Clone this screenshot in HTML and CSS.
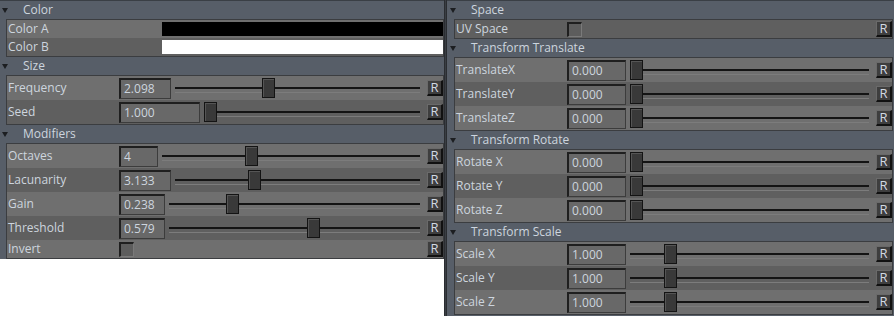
FILE: index.html
```html
<!DOCTYPE html>
<html>
<head>
<meta charset="utf-8">
<link rel="stylesheet" href="styles.css">
</head>
<body>
<div class="app">
  <section class="panel panel-left">
    <div class="panel-body">
      <div class="group-head"><span class="caret"></span><span>Color</span></div>
      <div class="group-box">
        <div class="row short light"><span class="label">Color A</span><span class="swatch swatch-black"></span></div>
        <div class="row short dark"><span class="label">Color B</span><span class="swatch swatch-white"></span></div>
      </div>

      <div class="group-head"><span class="caret"></span><span>Size</span></div>
      <div class="group-box">
        <div class="row light"><span class="label">Frequency</span><span class="field w52">2.098</span><span class="slider"><span class="handle" style="left:calc((100% - 12px) * 0.373)"></span></span><span class="reset">R</span></div>
        <div class="row dark"><span class="label">Seed</span><span class="field w80">1.000</span><span class="slider"><span class="handle" style="left:0"></span></span><span class="reset">R</span></div>
      </div>

      <div class="group-head"><span class="caret"></span><span>Modifiers</span></div>
      <div class="group-box">
        <div class="row light"><span class="label">Octaves</span><span class="field w38">4</span><span class="slider"><span class="handle" style="left:calc((100% - 12px) * 0.336)"></span></span><span class="reset">R</span></div>
        <div class="row dark"><span class="label">Lacunarity</span><span class="field w52">3.133</span><span class="slider"><span class="handle" style="left:calc((100% - 12px) * 0.313)"></span></span><span class="reset">R</span></div>
        <div class="row light"><span class="label">Gain</span><span class="field w45">0.238</span><span class="slider"><span class="handle" style="left:calc((100% - 12px) * 0.238)"></span></span><span class="reset">R</span></div>
        <div class="row dark"><span class="label">Threshold</span><span class="field w45">0.579</span><span class="slider"><span class="handle" style="left:calc((100% - 12px) * 0.579)"></span></span><span class="reset">R</span></div>
        <div class="row short light"><span class="label">Invert</span><span class="check"></span><span class="fill"></span><span class="reset">R</span></div>
      </div>
    </div>
  </section>

  <div class="splitter"></div>

  <section class="panel panel-right">
    <div class="group-head"><span class="caret"></span><span>Space</span></div>
    <div class="group-box">
      <div class="row short dark"><span class="label">UV Space</span><span class="check"></span><span class="fill"></span><span class="reset">R</span></div>
    </div>

    <div class="group-head"><span class="caret"></span><span>Transform Translate</span></div>
    <div class="group-box">
      <div class="row light"><span class="label">TranslateX</span><span class="field w59">0.000</span><span class="slider"><span class="handle" style="left:0"></span></span><span class="reset">R</span></div>
      <div class="row dark"><span class="label">TranslateY</span><span class="field w59">0.000</span><span class="slider"><span class="handle" style="left:0"></span></span><span class="reset">R</span></div>
      <div class="row light"><span class="label">TranslateZ</span><span class="field w59">0.000</span><span class="slider"><span class="handle" style="left:0"></span></span><span class="reset">R</span></div>
    </div>

    <div class="group-head"><span class="caret"></span><span>Transform Rotate</span></div>
    <div class="group-box">
      <div class="row light"><span class="label">Rotate X</span><span class="field w59">0.000</span><span class="slider"><span class="handle" style="left:0"></span></span><span class="reset">R</span></div>
      <div class="row dark"><span class="label">Rotate Y</span><span class="field w59">0.000</span><span class="slider"><span class="handle" style="left:0"></span></span><span class="reset">R</span></div>
      <div class="row light"><span class="label">Rotate Z</span><span class="field w59">0.000</span><span class="slider"><span class="handle" style="left:0"></span></span><span class="reset">R</span></div>
    </div>

    <div class="group-head"><span class="caret"></span><span>Transform Scale</span></div>
    <div class="group-box">
      <div class="row light"><span class="label">Scale X</span><span class="field w59">1.000</span><span class="slider"><span class="handle" style="left:calc((100% - 12px) * 0.15)"></span></span><span class="reset">R</span></div>
      <div class="row dark"><span class="label">Scale Y</span><span class="field w59">1.000</span><span class="slider"><span class="handle" style="left:calc((100% - 12px) * 0.15)"></span></span><span class="reset">R</span></div>
      <div class="row light"><span class="label">Scale Z</span><span class="field w59">1.000</span><span class="slider"><span class="handle" style="left:calc((100% - 12px) * 0.15)"></span></span><span class="reset">R</span></div>
    </div>
  </section>
</div>
</body>
</html>
```

FILE: styles.css
```css
* { box-sizing: border-box; }

html, body {
  margin: 0;
  padding: 0;
  width: 894px;
  height: 316px;
  overflow: hidden;
  background: #ffffff;
}

body {
  font-family: "Open Sans", "Noto Sans", sans-serif;
  font-size: 12px;
  color: #cdd5de;
}

.app {
  display: flex;
  height: 316px;
}

.panel {
  display: flex;
  flex-direction: column;
}

.panel-left {
  width: 444px;
  background: #ffffff;
}

.panel-body {
  background: #575e68;
  border-top: 1px solid #3a3f45;
  padding-left: 6px;
  display: flex;
  flex-direction: column;
}

.panel-right {
  width: 447px;
  background: #575e68;
  border-top: 1px solid #3a3f45;
  padding-left: 7px;
  padding-right: 1px;
}

.splitter {
  width: 3px;
  background: #3a3e44;
  border-left: 1px solid #2a2d31;
  border-right: 1px solid #2a2d31;
}

.group-head {
  height: 18px;
  display: flex;
  align-items: center;
  line-height: 18px;
  white-space: nowrap;
}

.panel-left .group-head { margin-left: -6px; }
.panel-right .group-head { margin-left: -7px; }

.caret {
  width: 0;
  height: 0;
  border-left: 3px solid transparent;
  border-right: 3px solid transparent;
  border-top: 5px solid #1c1e21;
  margin-left: 2px;
  margin-right: 15px;
  margin-top: 1px;
}

.panel-right .caret {
  margin-left: 3px;
  margin-right: 15px;
}

.group-box {
  border: 1px solid #3b3d40;
  display: flex;
  flex-direction: column;
}

.row {
  height: 24px;
  display: flex;
  align-items: center;
  white-space: nowrap;
}

.row.short { height: 18px; }
.row.light { background: #6f6f6f; }
.row.dark { background: #5f5f5f; }

.label {
  width: 112px;
  padding-left: 1px;
  flex: none;
  line-height: 18px;
}

.swatch {
  flex: 1;
  height: 14px;
  margin-left: 43px;
}

.swatch-black { background: #000000; }
.swatch-white { background: #ffffff; }

.field {
  flex: none;
  height: 21px;
  line-height: 18px;
  padding-left: 3px;
  background: #686868;
  border-style: solid;
  border-color: #1f1f1f #3c3c3c #3c3c3c #1f1f1f;
  border-width: 2px 1px 1px 2px;
}

.w38 { width: 39px; }
.w45 { width: 46px; }
.w52 { width: 52px; }
.w59 { width: 59px; }
.w80 { width: 81px; }

.slider {
  position: relative;
  flex: 1;
  height: 20px;
  margin-left: 4px;
  margin-right: 7px;
}

.slider::before {
  content: "";
  position: absolute;
  left: 0;
  right: 0;
  top: 9px;
  height: 3px;
  border-top: 2px solid #141414;
  border-bottom: 1px solid #7c7c7c;
}

.handle {
  position: absolute;
  top: 0;
  width: 13px;
  height: 20px;
  background: #393939;
  border: 1px solid #141414;
  box-shadow: inset 1px 1px 0 #555555;
}

.check {
  flex: none;
  width: 15px;
  height: 15px;
  background: #5d5d5d;
  border-style: solid;
  border-color: #1f1f1f #7a7a7a #7a7a7a #1f1f1f;
  border-width: 2px 1px 1px 2px;
}

.fill { flex: 1; }

.reset {
  flex: none;
  width: 16px;
  height: 16px;
  background: #3e3e3e;
  border-style: solid;
  border-color: #6a6a6a #111111 #111111 #6a6a6a;
  border-width: 1px 2px 2px 1px;
  font-size: 13px;
  line-height: 13px;
  text-align: center;
  color: #d2dae3;
}
```
